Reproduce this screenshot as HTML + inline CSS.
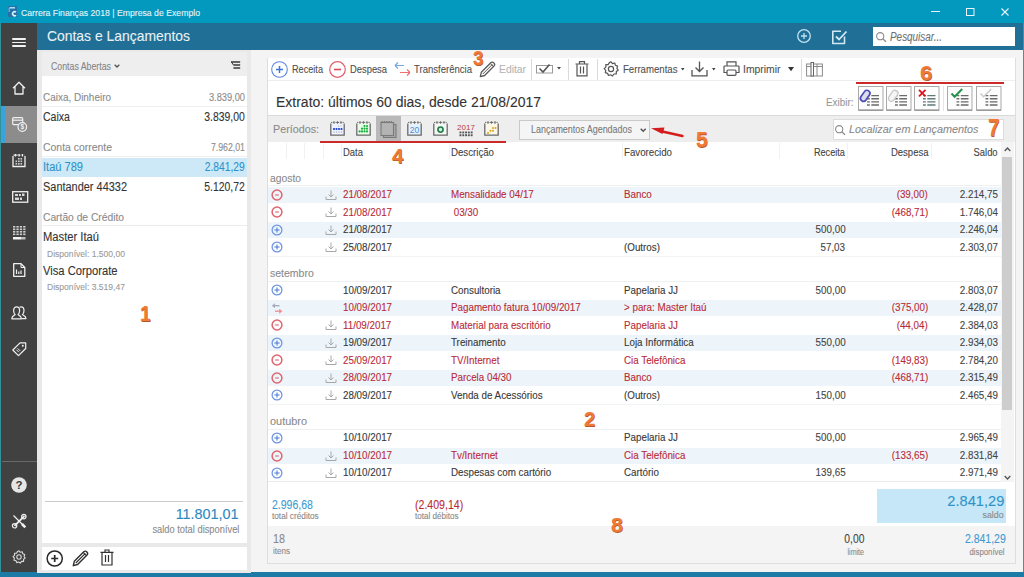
<!DOCTYPE html>
<html><head><meta charset="utf-8"><style>
html,body{margin:0;padding:0;width:1024px;height:577px;overflow:hidden;background:#f4f4f4;}
body{position:relative;font-family:"Liberation Sans", sans-serif;}
.t{position:absolute;white-space:nowrap;line-height:1;display:inline-block;-webkit-text-stroke:0.1px currentColor;}
svg{overflow:visible;}
</style></head><body>
<div style="position:absolute;left:0.00px;top:0.00px;width:1024.00px;height:23.00px;background:#0398be;"></div>
<div style="position:absolute;left:0.00px;top:23.00px;width:1024.00px;height:27.00px;background:#1f6f96;"></div>
<div style="position:absolute;left:0.00px;top:23.00px;width:37.00px;height:554.00px;background:#414141;"></div>
<div style="position:absolute;left:0.00px;top:23.00px;width:1.30px;height:554.00px;background:#33919a;"></div>
<div style="position:absolute;left:37.00px;top:50.00px;width:987.00px;height:527.00px;background:#f4f4f4;"></div>
<div style="position:absolute;left:1022.60px;top:23.00px;width:1.40px;height:554.00px;background:#3a98a4;"></div>
<div style="position:absolute;left:0.00px;top:572.30px;width:1024.00px;height:4.70px;background:#1b7aa6;"></div>
<div style="position:absolute;left:1.30px;top:106.00px;width:35.70px;height:36.50px;background:#8c8c8c;"></div>
<div style="position:absolute;left:1.30px;top:106.00px;width:4.20px;height:36.50px;background:#3aa3db;"></div>
<div style="position:absolute;left:2.00px;top:460.50px;width:35.00px;height:1.20px;background:#6a6a6a;"></div>
<div style="position:absolute;left:37.00px;top:50.00px;width:214.00px;height:523.00px;background:#e9e9e9;"></div>
<div style="position:absolute;left:41.50px;top:51.50px;width:205.50px;height:24.00px;background:#eeeeee;"></div>
<div style="position:absolute;left:41.50px;top:76.00px;width:205.50px;height:466.50px;background:#ffffff;"></div>
<div style="position:absolute;left:41.50px;top:547.00px;width:205.50px;height:23.00px;background:#ffffff;"></div>
<div style="position:absolute;left:42.00px;top:105.50px;width:205.00px;height:1.00px;background:#f0f0f0;"></div>
<div style="position:absolute;left:42.00px;top:155.50px;width:205.00px;height:1.00px;background:#f0f0f0;"></div>
<div style="position:absolute;left:42.00px;top:157.75px;width:204.50px;height:18.75px;background:#cde8f7;"></div>
<div style="position:absolute;left:42.00px;top:225.40px;width:205.00px;height:1.00px;background:#ececec;"></div>
<div style="position:absolute;left:45.00px;top:500.80px;width:198.00px;height:1.00px;background:#c8ccce;"></div>
<div style="position:absolute;left:266.50px;top:58.00px;width:749.00px;height:505.50px;background:#dedede;"></div>
<div style="position:absolute;left:267.50px;top:58.00px;width:747.00px;height:504.50px;background:#ffffff;"></div>
<div style="position:absolute;left:267.50px;top:80.00px;width:747.00px;height:1.00px;background:#eeeeee;"></div>
<div style="position:absolute;left:267.50px;top:115.00px;width:747.00px;height:27.00px;background:#eeeeee;"></div>
<div style="position:absolute;left:267.50px;top:114.80px;width:747.00px;height:1.00px;background:#dadada;"></div>
<div style="position:absolute;left:1001.00px;top:142.00px;width:12.50px;height:340.00px;background:#f4f4f4;"></div>
<div style="position:absolute;left:1002.00px;top:157.00px;width:9.50px;height:253.00px;background:#cdcdcd;"></div>
<div style="position:absolute;left:873.30px;top:27.40px;width:141.40px;height:18.60px;background:#ffffff;"></div>
<div style="position:absolute;left:519.00px;top:119.50px;width:131.25px;height:20.00px;background:#f5f5f5;box-sizing:border-box;border:1px solid #c9c9c9;"></div>
<div style="position:absolute;left:832.50px;top:118.75px;width:171.75px;height:20.75px;background:#ffffff;box-sizing:border-box;border:1px solid #dcdcdc;"></div>
<div style="position:absolute;left:376.00px;top:116.00px;width:25.00px;height:25.50px;background:#b9b9b9;"></div>
<div style="position:absolute;left:7.80px;top:6.20px;width:9.40px;height:10.40px;background:#2572a8;"></div>
<svg style="position:absolute;left:7.80px;top:6.20px;" width="9.4" height="10.4" viewBox="0 0 9.4 10.4"><path d="M1.5 1.8H7" stroke="#a8dcf2" stroke-width="1.6"/><path d="M1.2 1.8V6" stroke="#6fb8de" stroke-width="1.2"/><path d="M8 6.3A2 2 0 1 0 8 9.2" fill="none" stroke="#e0f4fc" stroke-width="1.5"/></svg>
<div style="position:absolute;left:931.00px;top:10.80px;width:8.60px;height:1.00px;background:#e8f6fb;"></div>
<svg style="position:absolute;left:965.70px;top:7.90px;" width="8.5" height="8" viewBox="0 0 8.5 8"><rect x="0.5" y="0.5" width="7.5" height="7" fill="none" stroke="#e8f6fb" stroke-width="1"/></svg>
<svg style="position:absolute;left:1001.40px;top:7.80px;" width="8" height="8" viewBox="0 0 8 8"><path d="M0.5 0.5L7.5 7.5M7.5 0.5L0.5 7.5" stroke="#e8f6fb" stroke-width="1.1"/></svg>
<div style="position:absolute;left:12.00px;top:37.80px;width:13.50px;height:1.90px;background:#f2f2f2;border-radius:1px;"></div>
<div style="position:absolute;left:12.00px;top:41.50px;width:13.50px;height:1.90px;background:#f2f2f2;border-radius:1px;"></div>
<div style="position:absolute;left:12.00px;top:45.10px;width:13.50px;height:1.90px;background:#f2f2f2;border-radius:1px;"></div>
<svg style="position:absolute;left:11.70px;top:81.00px;" width="14" height="14" viewBox="0 0 14 14"><path d="M1 7.2L7 1.2L13 7.2M3 5.5V13H11V5.5" fill="none" stroke="#f0f0f0" stroke-width="1.3" stroke-linejoin="round"/></svg>
<svg style="position:absolute;left:11.70px;top:116.80px;" width="15.5" height="15" viewBox="0 0 15.5 15"><rect x="0.7" y="0.7" width="10" height="7" rx="1" fill="none" stroke="#f0f0f0" stroke-width="1.2"/><path d="M0.7 3.2H10.7" stroke="#f0f0f0" stroke-width="1.2"/><circle cx="10.3" cy="10" r="4.3" fill="#8c8c8c" stroke="#f0f0f0" stroke-width="1.2"/><text x="10.3" y="12.3" font-size="6.5" text-anchor="middle" fill="#f0f0f0" font-family="Liberation Sans" font-weight="bold">$</text></svg>
<svg style="position:absolute;left:12.10px;top:153.20px;" width="14" height="14.5" viewBox="0 0 14 14.5"><path d="M1 3V13.5H13V3" fill="none" stroke="#f0f0f0" stroke-width="1.3"/><path d="M1.5 2.2H12.5" stroke="#f0f0f0" stroke-width="1.2" stroke-dasharray="1.5 1.2"/><path d="M3.5 1V3.5M7 1V3.5M10.5 1V3.5" stroke="#f0f0f0" stroke-width="1.2"/><g fill="#cfcfcf"><rect x="6" y="5" width="1.6" height="1.6"/><rect x="8.5" y="5" width="1.6" height="1.6"/><rect x="3.5" y="7.5" width="1.6" height="1.6"/><rect x="6" y="7.5" width="1.6" height="1.6"/><rect x="8.5" y="7.5" width="1.6" height="1.6"/><rect x="3.5" y="10" width="1.6" height="1.6"/><rect x="6" y="10" width="1.6" height="1.6"/><rect x="8.5" y="10" width="1.6" height="1.6"/></g></svg>
<svg style="position:absolute;left:12.10px;top:191.00px;" width="16.5" height="12" viewBox="0 0 16.5 12"><rect x="0.7" y="0.7" width="15" height="10.5" fill="none" stroke="#f0f0f0" stroke-width="1.3"/><g fill="#d8d8d8"><rect x="3" y="3" width="3" height="2"/><rect x="7" y="3" width="2" height="2"/><rect x="10" y="2.5" width="2.5" height="2.5"/><rect x="3" y="6.5" width="4" height="2.5"/><rect x="8" y="6.5" width="2" height="2.5"/></g></svg>
<svg style="position:absolute;left:13.30px;top:225.90px;" width="12.5" height="14" viewBox="0 0 12.5 14"><g fill="#cfcfcf"><rect x="0" y="0" width="2.3" height="1.6"/><rect x="3.4" y="0" width="2.3" height="1.6"/><rect x="6.8" y="0" width="2.3" height="1.6"/><rect x="10.2" y="0" width="2.3" height="1.6"/><rect x="0" y="2.5" width="2.3" height="1.6"/><rect x="3.4" y="2.5" width="2.3" height="1.6"/><rect x="6.8" y="2.5" width="2.3" height="1.6"/><rect x="10.2" y="2.5" width="2.3" height="1.6"/><rect x="0" y="5" width="2.3" height="1.6"/><rect x="3.4" y="5" width="2.3" height="1.6"/><rect x="6.8" y="5" width="2.3" height="1.6"/><rect x="10.2" y="5" width="2.3" height="1.6"/><rect x="0" y="7.5" width="2.3" height="1.6"/><rect x="3.4" y="7.5" width="2.3" height="1.6"/><rect x="6.8" y="7.5" width="2.3" height="1.6"/><rect x="10.2" y="7.5" width="2.3" height="1.6"/></g><rect x="0" y="11" width="8" height="2.5" fill="#f4f4f4"/><rect x="8" y="11" width="4.5" height="2.5" fill="#bdbdbd"/></svg>
<svg style="position:absolute;left:12.70px;top:262.90px;" width="12.5" height="14" viewBox="0 0 12.5 14"><path d="M0.7 0.7H8L11.8 4.5V13.3H0.7Z" fill="none" stroke="#f0f0f0" stroke-width="1.3" stroke-linejoin="round"/><path d="M8 0.7V4.5H11.8" fill="none" stroke="#f0f0f0" stroke-width="1"/><path d="M3.5 11V6.5M5.8 11V8.5M8 11V7.5" stroke="#f0f0f0" stroke-width="1.2"/></svg>
<svg style="position:absolute;left:10.90px;top:305.80px;" width="16" height="13.5" viewBox="0 0 16 13.5"><path d="M0.8 12.8C0.8 10 3 9.3 4.2 8.6C3 7.6 2.6 6 2.6 4.5C2.6 2.2 3.8 0.8 5.6 0.8C7.4 0.8 8.6 2.2 8.6 4.5C8.6 6 8.2 7.6 7 8.6C8.2 9.3 10.4 10 10.4 12.8Z" fill="none" stroke="#f0f0f0" stroke-width="1.2" stroke-linejoin="round"/><path d="M8.6 1.2C9 0.9 9.5 0.8 10 0.8C11.8 0.8 13 2.2 13 4.5C13 6 12.6 7.6 11.4 8.6C12.6 9.3 15 10 15 12.6H10.8" fill="none" stroke="#f0f0f0" stroke-width="1.2" stroke-linejoin="round"/></svg>
<svg style="position:absolute;left:11.50px;top:341.50px;" width="14.5" height="14.5" viewBox="0 0 14.5 14.5"><path d="M8 0.8H13.7V6.5L6.5 13.7L0.8 8Z" fill="none" stroke="#f0f0f0" stroke-width="1.2" stroke-linejoin="round"/><circle cx="10.8" cy="3.7" r="1" fill="#f0f0f0"/><path d="M4.3 7.6L6.9 10.2M5.6 6.3L8.2 8.9" stroke="#f0f0f0" stroke-width="1"/></svg>
<svg style="position:absolute;left:10.90px;top:476.60px;" width="16" height="16" viewBox="0 0 16 16"><circle cx="8" cy="8" r="7.8" fill="#e6e6e6"/><text x="8" y="12.3" font-size="11.5" text-anchor="middle" fill="#3b3b3b" font-family="Liberation Sans" font-weight="bold">?</text></svg>
<svg style="position:absolute;left:11.50px;top:513.70px;" width="14.5" height="14.5" viewBox="0 0 14.5 14.5"><path d="M1.5 1.5L12.5 12.5" stroke="#f0f0f0" stroke-width="1.3"/><path d="M10 10L13.3 13.3" stroke="#f0f0f0" stroke-width="2.6"/><path d="M12.5 1.8L2.5 11.8" stroke="#f0f0f0" stroke-width="1.8"/><circle cx="11.8" cy="2.6" r="2.2" fill="none" stroke="#f0f0f0" stroke-width="1.2"/><circle cx="2.6" cy="11.8" r="2.2" fill="none" stroke="#f0f0f0" stroke-width="1.2"/></svg>
<svg style="position:absolute;left:11.90px;top:550.00px;" width="14" height="14" viewBox="0 0 14 14"><path d="M7 0.8L8.3 2.3L10.3 1.8L10.8 3.8L12.7 4.5L12.1 6.5L13.2 8.1L11.6 9.3L11.6 11.4L9.6 11.4L8.3 13.1L6.7 12L4.7 12.6L4 10.7L2 10.2L2.4 8.2L1 6.6L2.6 5.4L2.5 3.3L4.5 3.2L5.6 1.4Z" fill="none" stroke="#d9d9d9" stroke-width="1.1" stroke-linejoin="round"/><circle cx="7" cy="7" r="2.2" fill="none" stroke="#d9d9d9" stroke-width="1.1"/></svg>
<svg style="position:absolute;left:797.30px;top:29.40px;" width="14" height="14" viewBox="0 0 14 14"><circle cx="7" cy="7" r="6.3" fill="none" stroke="#c2e2f1" stroke-width="1.3"/><path d="M7 4V10M4 7H10" stroke="#c2e2f1" stroke-width="1.3"/></svg>
<svg style="position:absolute;left:832.10px;top:28.80px;" width="16" height="15.5" viewBox="0 0 16 15.5"><path d="M12.5 7.5V14.5H0.8V2.2H9" fill="none" stroke="#d2e9f4" stroke-width="1.6" stroke-linejoin="round"/><path d="M4 7.5L7 10.5L14.5 2.5" fill="none" stroke="#d2e9f4" stroke-width="1.8"/></svg>
<svg style="position:absolute;left:876.00px;top:31.50px;" width="11" height="10" viewBox="0 0 11 10"><circle cx="4.2" cy="4.2" r="3.6" fill="none" stroke="#8a8a8a" stroke-width="1.1"/><path d="M6.8 6.8L10 9.7" stroke="#8a8a8a" stroke-width="1.2"/></svg>
<svg style="position:absolute;left:114.10px;top:63.60px;" width="6" height="4" viewBox="0 0 6 4"><path d="M0.7 0.7L3 3L5.3 0.7" fill="none" stroke="#555" stroke-width="1.4"/></svg>
<svg style="position:absolute;left:230.80px;top:60.50px;" width="9.5" height="8" viewBox="0 0 9.5 8"><path d="M0 1H9.2M2.4 4H9.2M2.4 7H9.2" stroke="#3a3a3a" stroke-width="1.3"/><path d="M0.5 1L2.4 4" stroke="#3a3a3a" stroke-width="1"/></svg>
<svg style="position:absolute;left:45.80px;top:549.60px;" width="17.5" height="17" viewBox="0 0 17.5 17"><circle cx="8.7" cy="8.5" r="7.6" fill="none" stroke="#2a2a2a" stroke-width="1.5"/><path d="M8.7 5V12M5.2 8.5H12.2" stroke="#2a2a2a" stroke-width="1.7"/></svg>
<svg style="position:absolute;left:72.00px;top:549.80px;" width="17" height="17" viewBox="0 0 17 17"><path d="M1.3 15.7L2.3 11.3L11.8 1.8Q13.4 0.4 14.9 1.9Q16.4 3.5 15 5L5.6 14.5Z" fill="none" stroke="#2e2e2e" stroke-width="1.4" stroke-linejoin="round"/><path d="M3.8 13L13.4 3.4M11.2 2.4L14.4 5.6" stroke="#2e2e2e" stroke-width="1.1"/></svg>
<svg style="position:absolute;left:99.50px;top:549.30px;" width="14" height="17" viewBox="0 0 14 17"><path d="M0.5 3.3H13.5M5 3.3V1H9V3.3" fill="none" stroke="#333" stroke-width="1.2"/><path d="M2 3.5V16H12V3.5M5.5 6V13M8.5 6V13" fill="none" stroke="#333" stroke-width="1.2"/></svg>
<svg style="position:absolute;left:271.00px;top:60.80px;" width="17" height="17" viewBox="0 0 17 17"><circle cx="8.5" cy="8.5" r="7.8" fill="none" stroke="#5f86db" stroke-width="1.1"/><path d="M8.5 5V12M5 8.5H12" stroke="#3f74d6" stroke-width="1.5"/></svg>
<svg style="position:absolute;left:329.40px;top:60.80px;" width="17" height="17" viewBox="0 0 17 17"><circle cx="8.5" cy="8.5" r="7.8" fill="none" stroke="#e2606a" stroke-width="1.2"/><path d="M5 8.5H12" stroke="#dc4a56" stroke-width="1.6"/></svg>
<svg style="position:absolute;left:393.50px;top:61.00px;" width="17" height="16" viewBox="0 0 17 16"><path d="M1 4.5H10M1 4.5L4 1.5M1 4.5L4 7.5" fill="none" stroke="#79a7e6" stroke-width="1.2"/><path d="M6 11.5H16M16 11.5L13 8.5M16 11.5L13 14.5" fill="none" stroke="#ef6f6f" stroke-width="1.2"/></svg>
<svg style="position:absolute;left:478.70px;top:60.80px;" width="17" height="17" viewBox="0 0 17 17"><path d="M1.3 15.7L2.3 11.3L11.8 1.8Q13.4 0.4 14.9 1.9Q16.4 3.5 15 5L5.6 14.5Z" fill="none" stroke="#5a5a5a" stroke-width="1.3" stroke-linejoin="round"/><path d="M3.8 13L13.4 3.4M11.2 2.4L14.4 5.6" stroke="#5a5a5a" stroke-width="1"/></svg>
<div style="position:absolute;left:530.50px;top:58.50px;width:1.00px;height:21.00px;background:#dadada;"></div>
<svg style="position:absolute;left:535.90px;top:62.50px;" width="18" height="11" viewBox="0 0 18 11"><rect x="0.5" y="2.5" width="16" height="7.5" fill="none" stroke="#9a9a9a" stroke-width="1"/><path d="M3.5 5.5L7 9L13.5 1.5" fill="none" stroke="#555" stroke-width="1.6"/></svg>
<svg style="position:absolute;left:556.80px;top:67.20px;" width="4" height="3" viewBox="0 0 4 3"><path d="M0 0H4L2 2.5Z" fill="#444"/></svg>
<div style="position:absolute;left:567.80px;top:58.50px;width:1.00px;height:21.00px;background:#dadada;"></div>
<svg style="position:absolute;left:574.70px;top:61.10px;" width="14" height="15.5" viewBox="0 0 14 15.5"><path d="M0.5 3H13.5M4.5 3V0.7H9.5V3" fill="none" stroke="#555" stroke-width="1.2"/><path d="M2 3.2V14.8H12V3.2M5.5 5.5V12.5M8.5 5.5V12.5" fill="none" stroke="#555" stroke-width="1.2"/></svg>
<div style="position:absolute;left:596.60px;top:58.50px;width:1.00px;height:21.00px;background:#dadada;"></div>
<svg style="position:absolute;left:602.50px;top:61.10px;" width="16" height="16" viewBox="0 0 16 16"><path d="M8 0.8L9.5 2.6L11.8 2L12.4 4.3L14.6 5.1L13.9 7.4L15.2 9.2L13.3 10.6L13.3 13L11 13L9.5 15L7.6 13.8L5.4 14.5L4.6 12.3L2.3 11.7L2.8 9.4L1.1 7.6L2.9 6.1L2.8 3.7L5.1 3.6L6.4 1.6Z" fill="none" stroke="#555" stroke-width="1.2" stroke-linejoin="round"/><circle cx="8" cy="8" r="2.6" fill="none" stroke="#555" stroke-width="1.2"/></svg>
<svg style="position:absolute;left:680.60px;top:67.80px;" width="3.5" height="3" viewBox="0 0 3.5 3"><path d="M0 0H3.5L1.75 2.5Z" fill="#444"/></svg>
<svg style="position:absolute;left:691.40px;top:61.10px;" width="17" height="15.5" viewBox="0 0 17 15.5"><path d="M8.5 0.5V10.5M4.5 6.5L8.5 10.5L12.5 6.5" fill="none" stroke="#555" stroke-width="1.3"/><path d="M1 9V14.8H16V9" fill="none" stroke="#555" stroke-width="1.3"/></svg>
<svg style="position:absolute;left:712.40px;top:67.80px;" width="3.5" height="3" viewBox="0 0 3.5 3"><path d="M0 0H3.5L1.75 2.5Z" fill="#444"/></svg>
<svg style="position:absolute;left:723.20px;top:61.10px;" width="17" height="15" viewBox="0 0 17 15"><path d="M4 5V0.8H13V5" fill="none" stroke="#555" stroke-width="1.2"/><path d="M4 11.5H1V5.5Q1 5 1.5 5H15.5Q16 5 16 5.5V11.5H13" fill="none" stroke="#555" stroke-width="1.2"/><rect x="4" y="9" width="9" height="5.3" rx="1" fill="none" stroke="#555" stroke-width="1.2"/></svg>
<svg style="position:absolute;left:787.60px;top:66.80px;" width="6" height="4.5" viewBox="0 0 6 4.5"><path d="M0 0H6L3 4.3Z" fill="#333"/></svg>
<div style="position:absolute;left:800.80px;top:58.50px;width:1.00px;height:21.00px;background:#dadada;"></div>
<svg style="position:absolute;left:806.20px;top:61.90px;" width="17" height="14.5" viewBox="0 0 17 14.5"><rect x="0.6" y="2" width="15.8" height="12" fill="none" stroke="#8a8a8a" stroke-width="1"/><path d="M6 2V14M11 2V14M0.6 4.5H16.4" stroke="#8a8a8a" stroke-width="1"/><rect x="5" y="0.5" width="2.5" height="13.5" fill="#fff" stroke="#666" stroke-width="1"/></svg>
<svg style="position:absolute;left:858.30px;top:86.40px;" width="25.5" height="24.8" viewBox="0 0 25.5 24.8"><rect x="0.5" y="0.5" width="24.5" height="23.6" fill="#fdfdfd" stroke="#a9a9a9" stroke-width="1"/><path d="M0.5 24.2H25" stroke="#8f8f8f" stroke-width="1.2"/></svg>
<svg style="position:absolute;left:886.20px;top:86.40px;" width="25.5" height="24.8" viewBox="0 0 25.5 24.8"><rect x="0.5" y="0.5" width="24.5" height="23.6" fill="#fdfdfd" stroke="#a9a9a9" stroke-width="1"/><path d="M0.5 24.2H25" stroke="#8f8f8f" stroke-width="1.2"/></svg>
<svg style="position:absolute;left:914.00px;top:86.40px;" width="25.5" height="24.8" viewBox="0 0 25.5 24.8"><rect x="0.5" y="0.5" width="24.5" height="23.6" fill="#fdfdfd" stroke="#a9a9a9" stroke-width="1"/><path d="M0.5 24.2H25" stroke="#8f8f8f" stroke-width="1.2"/></svg>
<svg style="position:absolute;left:946.60px;top:86.40px;" width="25.5" height="24.8" viewBox="0 0 25.5 24.8"><rect x="0.5" y="0.5" width="24.5" height="23.6" fill="#fdfdfd" stroke="#a9a9a9" stroke-width="1"/><path d="M0.5 24.2H25" stroke="#8f8f8f" stroke-width="1.2"/></svg>
<svg style="position:absolute;left:975.80px;top:86.40px;" width="25.5" height="24.8" viewBox="0 0 25.5 24.8"><rect x="0.5" y="0.5" width="24.5" height="23.6" fill="#fdfdfd" stroke="#a9a9a9" stroke-width="1"/><path d="M0.5 24.2H25" stroke="#8f8f8f" stroke-width="1.2"/></svg>
<svg style="position:absolute;left:858.30px;top:86.40px;" width="25.5" height="24.8" viewBox="0 0 25.5 24.8"><path d="M9 9.6H11.8M13.3 9.6H21" stroke="#6a6a6a" stroke-width="1.4"/><path d="M9 12.75H11.8M13.3 12.75H21" stroke="#6a6a6a" stroke-width="1.4"/><path d="M9 15.9H11.8M13.3 15.9H21" stroke="#6a6a6a" stroke-width="1.4"/><path d="M9 19.05H11.8M13.3 19.05H21" stroke="#6a6a6a" stroke-width="1.4"/><rect x="4.2" y="3.8" width="6" height="12" rx="3" transform="rotate(35 7.2 9.8)" fill="#dde" stroke="#4c4cb5" stroke-width="1.7"/></svg>
<svg style="position:absolute;left:886.20px;top:86.40px;" width="25.5" height="24.8" viewBox="0 0 25.5 24.8"><path d="M9 9.6H11.8M13.3 9.6H21" stroke="#6a6a6a" stroke-width="1.4"/><path d="M9 12.75H11.8M13.3 12.75H21" stroke="#6a6a6a" stroke-width="1.4"/><path d="M9 15.9H11.8M13.3 15.9H21" stroke="#6a6a6a" stroke-width="1.4"/><path d="M9 19.05H11.8M13.3 19.05H21" stroke="#6a6a6a" stroke-width="1.4"/><rect x="4.2" y="3.8" width="6" height="12" rx="3" transform="rotate(35 7.2 9.8)" fill="#f6f6f6" stroke="#c8c8c8" stroke-width="1.3"/></svg>
<svg style="position:absolute;left:914.00px;top:86.40px;" width="25.8" height="24.8" viewBox="0 0 25.8 24.8"><path d="M9 9.6H11.8M13.3 9.6H21.5" stroke="#607a7a" stroke-width="1.4"/><path d="M9 12.75H11.8M13.3 12.75H21.5" stroke="#607a7a" stroke-width="1.4"/><path d="M9 15.9H11.8M13.3 15.9H21.5" stroke="#607a7a" stroke-width="1.4"/><path d="M9 19.05H11.8M13.3 19.05H21.5" stroke="#607a7a" stroke-width="1.4"/><path d="M5 3.8L11.5 10.3M11.5 3.8L5 10.3" stroke="#e0141e" stroke-width="1.8"/></svg>
<svg style="position:absolute;left:946.60px;top:86.40px;" width="26.2" height="24.8" viewBox="0 0 26.2 24.8"><path d="M9.5 9.6H12.3M13.8 9.6H21.5" stroke="#6a6a6a" stroke-width="1.4"/><path d="M9.5 12.75H12.3M13.8 12.75H21.5" stroke="#6a6a6a" stroke-width="1.4"/><path d="M9.5 15.9H12.3M13.8 15.9H21.5" stroke="#6a6a6a" stroke-width="1.4"/><path d="M9.5 19.05H12.3M13.8 19.05H21.5" stroke="#6a6a6a" stroke-width="1.4"/><path d="M4.5 7.5L7.6 10.8L15.2 3" fill="none" stroke="#23954a" stroke-width="2"/></svg>
<svg style="position:absolute;left:975.80px;top:86.40px;" width="25" height="24.8" viewBox="0 0 25 24.8"><path d="M9.5 9.6H12.3M13.8 9.6H21.5" stroke="#6a6a6a" stroke-width="1.4"/><path d="M9.5 12.75H12.3M13.8 12.75H21.5" stroke="#6a6a6a" stroke-width="1.4"/><path d="M9.5 15.9H12.3M13.8 15.9H21.5" stroke="#6a6a6a" stroke-width="1.4"/><path d="M9.5 19.05H12.3M13.8 19.05H21.5" stroke="#6a6a6a" stroke-width="1.4"/><path d="M4.5 7.5L7.6 10.8L15.2 3" fill="none" stroke="#c9c9c9" stroke-width="1.4"/></svg>
<div style="position:absolute;left:942.50px;top:86.00px;width:1.00px;height:25.00px;background:#e6e6e6;"></div>
<svg style="position:absolute;left:329.80px;top:121.20px;" width="15" height="15" viewBox="0 0 15 15"><rect x="1" y="2.5" width="13" height="11.5" fill="#eef2fb"/><path d="M0.8 2.5V14.2H14.2V2.5" fill="none" stroke="#6a6a6a" stroke-width="1.3"/><path d="M1 1.4H14" stroke="#6a6a6a" stroke-width="1" stroke-dasharray="1.3 1"/><path d="M4 0.3V2.8M7.5 0.3V2.8M11 0.3V2.8" stroke="#6a6a6a" stroke-width="1.1"/><circle cx="8.5" cy="5" r="0.6" fill="#9aa6c8"/><circle cx="11" cy="5" r="0.6" fill="#9aa6c8"/><circle cx="4" cy="8" r="1.1" fill="#1a3fcf"/><circle cx="6.5" cy="8" r="1.1" fill="#1a3fcf"/><circle cx="9" cy="8" r="1.1" fill="#1a3fcf"/><circle cx="11.5" cy="8" r="1.1" fill="#1a3fcf"/><circle cx="4" cy="11" r="0.7" fill="#a8b0c0"/><circle cx="6.5" cy="11" r="0.7" fill="#a8b0c0"/><circle cx="9" cy="11" r="0.7" fill="#a8b0c0"/><circle cx="11.5" cy="11" r="0.7" fill="#a8b0c0"/></svg>
<svg style="position:absolute;left:355.80px;top:121.20px;" width="15" height="15" viewBox="0 0 15 15"><rect x="1" y="2.5" width="13" height="11.5" fill="#eafbea"/><path d="M0.8 2.5V14.2H14.2V2.5" fill="none" stroke="#6a6a6a" stroke-width="1.3"/><path d="M1 1.4H14" stroke="#6a6a6a" stroke-width="1" stroke-dasharray="1.3 1"/><path d="M4 0.3V2.8M7.5 0.3V2.8M11 0.3V2.8" stroke="#6a6a6a" stroke-width="1.1"/><circle cx="8.5" cy="5" r="1.1" fill="#19b13a"/><circle cx="11" cy="5" r="1.1" fill="#19b13a"/><circle cx="6" cy="7.7" r="1.1" fill="#19b13a"/><circle cx="8.5" cy="7.7" r="1.1" fill="#19b13a"/><circle cx="11" cy="7.7" r="1.1" fill="#19b13a"/><circle cx="6" cy="10.4" r="1.1" fill="#19b13a"/><circle cx="8.5" cy="10.4" r="1.1" fill="#19b13a"/><circle cx="11" cy="10.4" r="1.1" fill="#19b13a"/><circle cx="3.6" cy="10.4" r="1.1" fill="#19b13a"/></svg>
<svg style="position:absolute;left:380.00px;top:119.50px;" width="17.5" height="19" viewBox="0 0 17.5 19"><rect x="3.5" y="4.5" width="12.5" height="13" fill="#a8a8a8" stroke="#7a7a7a" stroke-width="1.1"/><rect x="1" y="2.5" width="12.5" height="13" fill="#b3b3b3" stroke="#7a7a7a" stroke-width="1.1"/><path d="M1.5 1.5H13" stroke="#7a7a7a" stroke-width="1" stroke-dasharray="1.3 1"/></svg>
<svg style="position:absolute;left:407.30px;top:121.20px;" width="15" height="15" viewBox="0 0 15 15"><rect x="1" y="2.5" width="13" height="11.5" fill="#e6f1fb"/><path d="M0.8 2.5V14.2H14.2V2.5" fill="none" stroke="#6a6a6a" stroke-width="1.3"/><path d="M1 1.4H14" stroke="#6a6a6a" stroke-width="1" stroke-dasharray="1.3 1"/><path d="M4 0.3V2.8M7.5 0.3V2.8M11 0.3V2.8" stroke="#6a6a6a" stroke-width="1.1"/><text x="7.5" y="12.3" font-size="8.5" text-anchor="middle" fill="#4a8ed8" font-family="Liberation Sans">20</text></svg>
<svg style="position:absolute;left:433.00px;top:121.20px;" width="15" height="15" viewBox="0 0 15 15"><rect x="1" y="2.5" width="13" height="11.5" fill="#f4f8f4"/><path d="M0.8 2.5V14.2H14.2V2.5" fill="none" stroke="#6a6a6a" stroke-width="1.3"/><path d="M1 1.4H14" stroke="#6a6a6a" stroke-width="1" stroke-dasharray="1.3 1"/><path d="M4 0.3V2.8M7.5 0.3V2.8M11 0.3V2.8" stroke="#6a6a6a" stroke-width="1.1"/><circle cx="7.5" cy="8.6" r="2.6" fill="#d0f0dc" stroke="#1f7a4a" stroke-width="1.6"/></svg>
<svg style="position:absolute;left:458.00px;top:121.50px;" width="16.5" height="15" viewBox="0 0 16.5 15"><text x="8" y="7.5" font-size="8" text-anchor="middle" fill="#c23a3a" font-family="Liberation Sans">2017</text><rect x="1.5" y="9.5" width="1.9" height="1.9" fill="#555"/><rect x="1.5" y="12.3" width="1.9" height="1.9" fill="#555"/><rect x="4.3" y="9.5" width="1.9" height="1.9" fill="#555"/><rect x="4.3" y="12.3" width="1.9" height="1.9" fill="#555"/><rect x="7.1" y="9.5" width="1.9" height="1.9" fill="#555"/><rect x="7.1" y="12.3" width="1.9" height="1.9" fill="#555"/><rect x="9.9" y="9.5" width="1.9" height="1.9" fill="#555"/><rect x="9.9" y="12.3" width="1.9" height="1.9" fill="#555"/><rect x="12.7" y="9.5" width="1.9" height="1.9" fill="#555"/><rect x="12.7" y="12.3" width="1.9" height="1.9" fill="#555"/></svg>
<svg style="position:absolute;left:483.80px;top:121.20px;" width="15" height="15" viewBox="0 0 15 15"><rect x="1" y="2.5" width="13" height="11.5" fill="#fbf7e6"/><path d="M0.8 2.5V14.2H14.2V2.5" fill="none" stroke="#6a6a6a" stroke-width="1.3"/><path d="M1 1.4H14" stroke="#6a6a6a" stroke-width="1" stroke-dasharray="1.3 1"/><path d="M4 0.3V2.8M7.5 0.3V2.8M11 0.3V2.8" stroke="#6a6a6a" stroke-width="1.1"/><circle cx="9" cy="7" r="1" fill="#e0a21a"/><circle cx="11.5" cy="7" r="1" fill="#e0a21a"/><circle cx="6.5" cy="9.7" r="1" fill="#e0a21a"/><circle cx="9" cy="9.7" r="1" fill="#e0a21a"/><circle cx="4" cy="12" r="1" fill="#e0a21a"/></svg>
<svg style="position:absolute;left:639.80px;top:127.50px;" width="6.5" height="4" viewBox="0 0 6.5 4"><path d="M0.7 0.7L3.2 3.2L5.7 0.7" fill="none" stroke="#555" stroke-width="1.5"/></svg>
<svg style="position:absolute;left:835.00px;top:124.70px;" width="11" height="10" viewBox="0 0 11 10"><circle cx="4.2" cy="4.2" r="3.6" fill="none" stroke="#8a8a8a" stroke-width="1.1"/><path d="M6.8 6.8L10 9.7" stroke="#8a8a8a" stroke-width="1.2"/></svg>
<svg style="position:absolute;left:1003.50px;top:147.00px;" width="7" height="5" viewBox="0 0 7 5"><path d="M0.7 4L3.5 1L6.3 4" fill="none" stroke="#555" stroke-width="1.3"/></svg>
<svg style="position:absolute;left:1003.50px;top:474.50px;" width="7" height="5" viewBox="0 0 7 5"><path d="M0.7 1L3.5 4L6.3 1" fill="none" stroke="#555" stroke-width="1.3"/></svg>
<div style="position:absolute;left:285.50px;top:143.00px;width:1.00px;height:16.00px;background:#f1f1f1;"></div>
<div style="position:absolute;left:304.00px;top:143.00px;width:1.00px;height:16.00px;background:#f1f1f1;"></div>
<div style="position:absolute;left:322.50px;top:143.00px;width:1.00px;height:16.00px;background:#f1f1f1;"></div>
<div style="position:absolute;left:340.50px;top:143.00px;width:1.00px;height:16.00px;background:#f1f1f1;"></div>
<div style="position:absolute;left:448.50px;top:143.00px;width:1.00px;height:16.00px;background:#f1f1f1;"></div>
<div style="position:absolute;left:621.50px;top:143.00px;width:1.00px;height:16.00px;background:#f1f1f1;"></div>
<div style="position:absolute;left:778.75px;top:143.00px;width:1.00px;height:16.00px;background:#f1f1f1;"></div>
<div style="position:absolute;left:846.90px;top:143.00px;width:1.00px;height:16.00px;background:#f1f1f1;"></div>
<div style="position:absolute;left:930.60px;top:143.00px;width:1.00px;height:16.00px;background:#f1f1f1;"></div>
<div style="position:absolute;left:267.50px;top:185.40px;width:733.00px;height:1.00px;background:#eef0f2;"></div>
<div style="position:absolute;left:267.50px;top:186.90px;width:733.50px;height:16.60px;background:#edf5fb;"></div>
<svg style="position:absolute;left:271.40px;top:188.90px;" width="12" height="12" viewBox="0 0 12 12"><circle cx="6" cy="6" r="4.9" fill="none" stroke="#e2646e" stroke-width="1.5"/><path d="M4.2 6H7.8" stroke="#d8707a" stroke-width="1.2"/></svg>
<svg style="position:absolute;left:325.00px;top:188.90px;" width="12" height="12" viewBox="0 0 12 12"><path d="M6 1.5V8M3.5 5.5L6 8L8.5 5.5M1 7.5V10.5H11V7.5" fill="none" stroke="#a8a8a8" stroke-width="1"/></svg>
<svg style="position:absolute;left:271.40px;top:206.40px;" width="12" height="12" viewBox="0 0 12 12"><circle cx="6" cy="6" r="4.9" fill="none" stroke="#e2646e" stroke-width="1.5"/><path d="M4.2 6H7.8" stroke="#d8707a" stroke-width="1.2"/></svg>
<svg style="position:absolute;left:325.00px;top:206.40px;" width="12" height="12" viewBox="0 0 12 12"><path d="M6 1.5V8M3.5 5.5L6 8L8.5 5.5M1 7.5V10.5H11V7.5" fill="none" stroke="#a8a8a8" stroke-width="1"/></svg>
<div style="position:absolute;left:267.50px;top:221.90px;width:733.50px;height:16.60px;background:#edf5fb;"></div>
<svg style="position:absolute;left:271.40px;top:223.90px;" width="12" height="12" viewBox="0 0 12 12"><circle cx="6" cy="6" r="4.9" fill="none" stroke="#6d95e2" stroke-width="1.25"/><path d="M6 3.4V8.6M3.4 6H8.6" stroke="#4a7ad8" stroke-width="1.05"/></svg>
<svg style="position:absolute;left:325.00px;top:223.90px;" width="12" height="12" viewBox="0 0 12 12"><path d="M6 1.5V8M3.5 5.5L6 8L8.5 5.5M1 7.5V10.5H11V7.5" fill="none" stroke="#a8a8a8" stroke-width="1"/></svg>
<svg style="position:absolute;left:271.40px;top:241.40px;" width="12" height="12" viewBox="0 0 12 12"><circle cx="6" cy="6" r="4.9" fill="none" stroke="#6d95e2" stroke-width="1.25"/><path d="M6 3.4V8.6M3.4 6H8.6" stroke="#4a7ad8" stroke-width="1.05"/></svg>
<svg style="position:absolute;left:325.00px;top:241.40px;" width="12" height="12" viewBox="0 0 12 12"><path d="M6 1.5V8M3.5 5.5L6 8L8.5 5.5M1 7.5V10.5H11V7.5" fill="none" stroke="#a8a8a8" stroke-width="1"/></svg>
<div style="position:absolute;left:267.50px;top:280.70px;width:733.00px;height:1.00px;background:#eef0f2;"></div>
<div style="position:absolute;left:267.50px;top:255.70px;width:733.00px;height:1.00px;background:#f2f3f4;"></div>
<svg style="position:absolute;left:271.40px;top:284.20px;" width="12" height="12" viewBox="0 0 12 12"><circle cx="6" cy="6" r="4.9" fill="none" stroke="#6d95e2" stroke-width="1.25"/><path d="M6 3.4V8.6M3.4 6H8.6" stroke="#4a7ad8" stroke-width="1.05"/></svg>
<div style="position:absolute;left:267.50px;top:299.70px;width:733.50px;height:16.60px;background:#edf5fb;"></div>
<svg style="position:absolute;left:270.40px;top:300.70px;" width="14" height="14" viewBox="0 0 14 14"><path d="M4 4.7H9.5" stroke="#a4abbb" stroke-width="1.4"/><path d="M1.8 4.7L5 2.2V7.2Z" fill="#a4abbb"/><path d="M5 10.2H10" stroke="#ee9098" stroke-width="1.4"/><path d="M12.5 10.2L9.2 7.7V12.7Z" fill="#ee9098"/></svg>
<svg style="position:absolute;left:271.40px;top:319.20px;" width="12" height="12" viewBox="0 0 12 12"><circle cx="6" cy="6" r="4.9" fill="none" stroke="#e2646e" stroke-width="1.5"/><path d="M4.2 6H7.8" stroke="#d8707a" stroke-width="1.2"/></svg>
<svg style="position:absolute;left:325.00px;top:319.20px;" width="12" height="12" viewBox="0 0 12 12"><path d="M6 1.5V8M3.5 5.5L6 8L8.5 5.5M1 7.5V10.5H11V7.5" fill="none" stroke="#a8a8a8" stroke-width="1"/></svg>
<div style="position:absolute;left:267.50px;top:334.70px;width:733.50px;height:16.60px;background:#edf5fb;"></div>
<svg style="position:absolute;left:271.40px;top:336.70px;" width="12" height="12" viewBox="0 0 12 12"><circle cx="6" cy="6" r="4.9" fill="none" stroke="#6d95e2" stroke-width="1.25"/><path d="M6 3.4V8.6M3.4 6H8.6" stroke="#4a7ad8" stroke-width="1.05"/></svg>
<svg style="position:absolute;left:325.00px;top:336.70px;" width="12" height="12" viewBox="0 0 12 12"><path d="M6 1.5V8M3.5 5.5L6 8L8.5 5.5M1 7.5V10.5H11V7.5" fill="none" stroke="#a8a8a8" stroke-width="1"/></svg>
<svg style="position:absolute;left:271.40px;top:354.20px;" width="12" height="12" viewBox="0 0 12 12"><circle cx="6" cy="6" r="4.9" fill="none" stroke="#e2646e" stroke-width="1.5"/><path d="M4.2 6H7.8" stroke="#d8707a" stroke-width="1.2"/></svg>
<svg style="position:absolute;left:325.00px;top:354.20px;" width="12" height="12" viewBox="0 0 12 12"><path d="M6 1.5V8M3.5 5.5L6 8L8.5 5.5M1 7.5V10.5H11V7.5" fill="none" stroke="#a8a8a8" stroke-width="1"/></svg>
<div style="position:absolute;left:267.50px;top:369.70px;width:733.50px;height:16.60px;background:#edf5fb;"></div>
<svg style="position:absolute;left:271.40px;top:371.70px;" width="12" height="12" viewBox="0 0 12 12"><circle cx="6" cy="6" r="4.9" fill="none" stroke="#e2646e" stroke-width="1.5"/><path d="M4.2 6H7.8" stroke="#d8707a" stroke-width="1.2"/></svg>
<svg style="position:absolute;left:325.00px;top:371.70px;" width="12" height="12" viewBox="0 0 12 12"><path d="M6 1.5V8M3.5 5.5L6 8L8.5 5.5M1 7.5V10.5H11V7.5" fill="none" stroke="#a8a8a8" stroke-width="1"/></svg>
<svg style="position:absolute;left:271.40px;top:389.20px;" width="12" height="12" viewBox="0 0 12 12"><circle cx="6" cy="6" r="4.9" fill="none" stroke="#6d95e2" stroke-width="1.25"/><path d="M6 3.4V8.6M3.4 6H8.6" stroke="#4a7ad8" stroke-width="1.05"/></svg>
<svg style="position:absolute;left:325.00px;top:389.20px;" width="12" height="12" viewBox="0 0 12 12"><path d="M6 1.5V8M3.5 5.5L6 8L8.5 5.5M1 7.5V10.5H11V7.5" fill="none" stroke="#a8a8a8" stroke-width="1"/></svg>
<div style="position:absolute;left:267.50px;top:428.50px;width:733.00px;height:1.00px;background:#eef0f2;"></div>
<div style="position:absolute;left:267.50px;top:403.50px;width:733.00px;height:1.00px;background:#f2f3f4;"></div>
<svg style="position:absolute;left:271.40px;top:432.00px;" width="12" height="12" viewBox="0 0 12 12"><circle cx="6" cy="6" r="4.9" fill="none" stroke="#6d95e2" stroke-width="1.25"/><path d="M6 3.4V8.6M3.4 6H8.6" stroke="#4a7ad8" stroke-width="1.05"/></svg>
<div style="position:absolute;left:267.50px;top:447.50px;width:733.50px;height:16.60px;background:#edf5fb;"></div>
<svg style="position:absolute;left:271.40px;top:449.50px;" width="12" height="12" viewBox="0 0 12 12"><circle cx="6" cy="6" r="4.9" fill="none" stroke="#e2646e" stroke-width="1.5"/><path d="M4.2 6H7.8" stroke="#d8707a" stroke-width="1.2"/></svg>
<svg style="position:absolute;left:325.00px;top:449.50px;" width="12" height="12" viewBox="0 0 12 12"><path d="M6 1.5V8M3.5 5.5L6 8L8.5 5.5M1 7.5V10.5H11V7.5" fill="none" stroke="#a8a8a8" stroke-width="1"/></svg>
<svg style="position:absolute;left:271.40px;top:467.00px;" width="12" height="12" viewBox="0 0 12 12"><circle cx="6" cy="6" r="4.9" fill="none" stroke="#6d95e2" stroke-width="1.25"/><path d="M6 3.4V8.6M3.4 6H8.6" stroke="#4a7ad8" stroke-width="1.05"/></svg>
<svg style="position:absolute;left:325.00px;top:467.00px;" width="12" height="12" viewBox="0 0 12 12"><path d="M6 1.5V8M3.5 5.5L6 8L8.5 5.5M1 7.5V10.5H11V7.5" fill="none" stroke="#a8a8a8" stroke-width="1"/></svg>
<div style="position:absolute;left:267.50px;top:481.20px;width:733.00px;height:1.20px;background:#ececec;"></div>
<div style="position:absolute;left:267.50px;top:526.00px;width:747.00px;height:36.60px;background:#f4f4f4;"></div>
<div style="position:absolute;left:877.30px;top:489.00px;width:129.20px;height:34.00px;background:#c6e7f8;"></div>
<div style="position:absolute;left:319.75px;top:141.20px;width:186.25px;height:2.00px;background:#cc2a2a;"></div>
<div style="position:absolute;left:855.50px;top:81.50px;width:148.50px;height:2.00px;background:#cc2a2a;"></div>
<svg style="position:absolute;left:648.00px;top:122.00px;" width="38" height="16" viewBox="0 0 38 16"><path d="M12 9L34.5 14" stroke="#d41c1c" stroke-width="2.4" stroke-linecap="round"/><path d="M3 6.3L16.5 5.4L14.5 12Z" fill="#d41c1c"/></svg>
<span id="t1" class="t" style="left:21.00px;top:7.57px;font-size:9.60px;color:#e6f4f9;transform:scaleX(0.9055);transform-origin:left;">Carrera Finan&ccedil;as 2018 | Empresa de Exemplo</span>
<span id="t2" class="t" style="left:47.00px;top:28.63px;font-size:14.50px;color:#e9f1f5;transform:scaleX(0.9589);transform-origin:left;">Contas e Lan&ccedil;amentos</span>
<span id="t3" class="t" style="left:890.00px;top:30.84px;font-size:12.00px;color:#707070;font-style:italic;transform:scaleX(0.8264);transform-origin:left;">Pesquisar...</span>
<span id="t4" class="t" style="left:50.60px;top:60.51px;font-size:10.50px;color:#858585;transform:scaleX(0.8357);transform-origin:left;">Contas Abertas</span>
<span id="t5" class="t" style="left:43.00px;top:93.23px;font-size:10.00px;color:#8a8a8a;transform:scaleX(0.9945);transform-origin:left;">Caixa, Dinheiro</span>
<span id="t6" class="t" style="right:779.00px;top:93.23px;font-size:10.00px;color:#8a8a8a;transform:scaleX(0.9246);transform-origin:right;">3.839,00</span>
<span id="t7" class="t" style="left:43.00px;top:111.34px;font-size:12.00px;color:#333333;transform:scaleX(0.8798);transform-origin:left;">Caixa</span>
<span id="t8" class="t" style="right:779.00px;top:111.34px;font-size:12.00px;color:#333333;transform:scaleX(0.8669);transform-origin:right;">3.839,00</span>
<span id="t9" class="t" style="left:43.00px;top:143.03px;font-size:10.00px;color:#8a8a8a;transform:scaleX(1.0430);transform-origin:left;">Conta corrente</span>
<span id="t10" class="t" style="right:779.00px;top:143.03px;font-size:10.00px;color:#8a8a8a;transform:scaleX(0.8732);transform-origin:right;">7.962,01</span>
<span id="t11" class="t" style="left:43.00px;top:160.84px;font-size:12.00px;color:#2f93c9;transform:scaleX(0.9222);transform-origin:left;">Ita&uacute; 789</span>
<span id="t12" class="t" style="right:779.00px;top:160.84px;font-size:12.00px;color:#2f93c9;transform:scaleX(0.8562);transform-origin:right;">2.841,29</span>
<span id="t13" class="t" style="left:43.00px;top:180.84px;font-size:12.00px;color:#333333;transform:scaleX(0.9121);transform-origin:left;">Santander 44332</span>
<span id="t14" class="t" style="right:779.00px;top:180.84px;font-size:12.00px;color:#333333;transform:scaleX(0.8669);transform-origin:right;">5.120,72</span>
<span id="t15" class="t" style="left:43.00px;top:212.53px;font-size:10.00px;color:#8a8a8a;transform:scaleX(1.0261);transform-origin:left;">Cart&atilde;o de Cr&eacute;dito</span>
<span id="t16" class="t" style="left:43.00px;top:230.84px;font-size:12.00px;color:#333333;transform:scaleX(0.9328);transform-origin:left;">Master Ita&uacute;</span>
<span id="t17" class="t" style="left:47.00px;top:249.51px;font-size:9.20px;color:#9a9a9a;transform:scaleX(0.9312);transform-origin:left;">Dispon&iacute;vel: 1.500,00</span>
<span id="t18" class="t" style="left:43.00px;top:265.09px;font-size:12.00px;color:#333333;transform:scaleX(0.9333);transform-origin:left;">Visa Corporate</span>
<span id="t19" class="t" style="left:47.00px;top:283.41px;font-size:9.20px;color:#9a9a9a;transform:scaleX(0.9312);transform-origin:left;">Dispon&iacute;vel: 3.519,47</span>
<span id="t20" class="t" style="right:785.60px;top:506.30px;font-size:15.00px;color:#2a88c0;transform:scaleX(0.9600);transform-origin:right;">11.801,01</span>
<span id="t21" class="t" style="right:785.00px;top:525.13px;font-size:10.00px;color:#8a8a8a;transform:scaleX(0.9314);transform-origin:right;">saldo total dispon&iacute;vel</span>
<span id="t22" class="t" style="left:292.00px;top:64.01px;font-size:10.50px;color:#505050;transform:scaleX(0.8706);transform-origin:left;">Receita</span>
<span id="t23" class="t" style="left:350.00px;top:64.01px;font-size:10.50px;color:#505050;transform:scaleX(0.8926);transform-origin:left;">Despesa</span>
<span id="t24" class="t" style="left:414.00px;top:64.01px;font-size:10.50px;color:#505050;transform:scaleX(0.9089);transform-origin:left;">Transfer&ecirc;ncia</span>
<span id="t25" class="t" style="left:499.00px;top:64.01px;font-size:10.50px;color:#b5b5b5;transform:scaleX(0.9841);transform-origin:left;">Editar</span>
<span id="t26" class="t" style="left:622.50px;top:64.01px;font-size:10.50px;color:#505050;transform:scaleX(0.9155);transform-origin:left;">Ferramentas</span>
<span id="t27" class="t" style="left:743.00px;top:64.01px;font-size:10.50px;color:#505050;transform:scaleX(0.9889);transform-origin:left;">Imprimir</span>
<span id="t28" class="t" style="left:276.40px;top:95.15px;font-size:14.00px;color:#333333;transform:scaleX(0.9985);transform-origin:left;">Extrato: &uacute;ltimos 60 dias, desde 21/08/2017</span>
<span id="t29" class="t" style="left:825.50px;top:98.13px;font-size:10.00px;color:#999999;transform:scaleX(0.9893);transform-origin:left;">Exibir:</span>
<span id="t30" class="t" style="left:273.00px;top:123.69px;font-size:11.00px;color:#8a8a8a;transform:scaleX(0.9768);transform-origin:left;">Per&iacute;odos:</span>
<span id="t31" class="t" style="left:530.75px;top:124.53px;font-size:10.00px;color:#7a7a7a;transform:scaleX(0.8948);transform-origin:left;">Lan&ccedil;amentos Agendados</span>
<span id="t32" class="t" style="left:849.00px;top:124.49px;font-size:11.00px;color:#8a8a8a;font-style:italic;transform:scaleX(0.9850);transform-origin:left;">Localizar em Lan&ccedil;amentos</span>
<span id="t33" class="t" style="left:343.00px;top:148.03px;font-size:10.00px;color:#444444;transform:scaleX(0.9467);transform-origin:left;">Data</span>
<span id="t34" class="t" style="left:451.00px;top:148.03px;font-size:10.00px;color:#444444;transform:scaleX(0.9670);transform-origin:left;">Descri&ccedil;&atilde;o</span>
<span id="t35" class="t" style="left:624.00px;top:148.03px;font-size:10.00px;color:#444444;transform:scaleX(0.9703);transform-origin:left;">Favorecido</span>
<span id="t36" class="t" style="right:178.70px;top:148.03px;font-size:10.00px;color:#444444;transform:scaleX(0.9143);transform-origin:right;">Receita</span>
<span id="t37" class="t" style="right:96.00px;top:148.03px;font-size:10.00px;color:#444444;transform:scaleX(0.9501);transform-origin:right;">Despesa</span>
<span id="t38" class="t" style="right:26.20px;top:148.03px;font-size:10.00px;color:#444444;transform:scaleX(0.9383);transform-origin:right;">Saldo</span>
<span id="t39" class="t" style="left:270.00px;top:172.61px;font-size:10.50px;color:#8a8a8a;transform:scaleX(0.9832);transform-origin:left;">agosto</span>
<span id="t40" class="t" style="left:342.50px;top:190.28px;font-size:10.00px;color:#b92b38;transform:scaleX(0.9800);transform-origin:left;">21/08/2017</span>
<span id="t41" class="t" style="left:451.00px;top:190.28px;font-size:10.00px;color:#b92b38;transform:scaleX(0.9800);transform-origin:left;">Mensalidade 04/17</span>
<span id="t42" class="t" style="left:624.00px;top:190.28px;font-size:10.00px;color:#b92b38;transform:scaleX(0.9800);transform-origin:left;">Banco</span>
<span id="t43" class="t" style="right:96.20px;top:190.28px;font-size:10.00px;color:#b92b38;transform:scaleX(0.9800);transform-origin:right;">(39,00)</span>
<span id="t44" class="t" style="right:26.00px;top:190.28px;font-size:10.00px;color:#444444;transform:scaleX(0.9800);transform-origin:right;">2.214,75</span>
<span id="t45" class="t" style="left:342.50px;top:207.78px;font-size:10.00px;color:#b92b38;transform:scaleX(0.9800);transform-origin:left;">21/08/2017</span>
<span id="t46" class="t" style="left:451.00px;top:207.78px;font-size:10.00px;color:#b92b38;transform:scaleX(0.9800);transform-origin:left;">&nbsp;03/30</span>
<span id="t47" class="t" style="right:96.20px;top:207.78px;font-size:10.00px;color:#b92b38;transform:scaleX(0.9800);transform-origin:right;">(468,71)</span>
<span id="t48" class="t" style="right:26.00px;top:207.78px;font-size:10.00px;color:#444444;transform:scaleX(0.9800);transform-origin:right;">1.746,04</span>
<span id="t49" class="t" style="left:342.50px;top:225.28px;font-size:10.00px;color:#383838;transform:scaleX(0.9800);transform-origin:left;">21/08/2017</span>
<span id="t50" class="t" style="right:178.70px;top:225.28px;font-size:10.00px;color:#444444;transform:scaleX(0.9800);transform-origin:right;">500,00</span>
<span id="t51" class="t" style="right:26.00px;top:225.28px;font-size:10.00px;color:#444444;transform:scaleX(0.9800);transform-origin:right;">2.246,04</span>
<span id="t52" class="t" style="left:342.50px;top:242.78px;font-size:10.00px;color:#383838;transform:scaleX(0.9800);transform-origin:left;">25/08/2017</span>
<span id="t53" class="t" style="left:624.00px;top:242.78px;font-size:10.00px;color:#383838;transform:scaleX(0.9800);transform-origin:left;">(Outros)</span>
<span id="t54" class="t" style="right:178.70px;top:242.78px;font-size:10.00px;color:#444444;transform:scaleX(0.9800);transform-origin:right;">57,03</span>
<span id="t55" class="t" style="right:26.00px;top:242.78px;font-size:10.00px;color:#444444;transform:scaleX(0.9800);transform-origin:right;">2.303,07</span>
<span id="t56" class="t" style="left:270.00px;top:267.91px;font-size:10.50px;color:#8a8a8a;transform:scaleX(0.9993);transform-origin:left;">setembro</span>
<span id="t57" class="t" style="left:342.50px;top:285.59px;font-size:10.00px;color:#383838;transform:scaleX(0.9800);transform-origin:left;">10/09/2017</span>
<span id="t58" class="t" style="left:451.00px;top:285.59px;font-size:10.00px;color:#383838;transform:scaleX(0.9800);transform-origin:left;">Consultoria</span>
<span id="t59" class="t" style="left:624.00px;top:285.59px;font-size:10.00px;color:#383838;transform:scaleX(0.9800);transform-origin:left;">Papelaria JJ</span>
<span id="t60" class="t" style="right:178.70px;top:285.59px;font-size:10.00px;color:#444444;transform:scaleX(0.9800);transform-origin:right;">500,00</span>
<span id="t61" class="t" style="right:26.00px;top:285.59px;font-size:10.00px;color:#444444;transform:scaleX(0.9800);transform-origin:right;">2.803,07</span>
<span id="t62" class="t" style="left:342.50px;top:303.09px;font-size:10.00px;color:#b92b38;transform:scaleX(0.9800);transform-origin:left;">10/09/2017</span>
<span id="t63" class="t" style="left:451.00px;top:303.09px;font-size:10.00px;color:#b92b38;transform:scaleX(0.9800);transform-origin:left;">Pagamento fatura 10/09/2017</span>
<span id="t64" class="t" style="left:624.00px;top:303.09px;font-size:10.00px;color:#b92b38;transform:scaleX(0.9800);transform-origin:left;">&gt; para: Master Ita&uacute;</span>
<span id="t65" class="t" style="right:96.20px;top:303.09px;font-size:10.00px;color:#b92b38;transform:scaleX(0.9800);transform-origin:right;">(375,00)</span>
<span id="t66" class="t" style="right:26.00px;top:303.09px;font-size:10.00px;color:#444444;transform:scaleX(0.9800);transform-origin:right;">2.428,07</span>
<span id="t67" class="t" style="left:342.50px;top:320.59px;font-size:10.00px;color:#b92b38;transform:scaleX(0.9800);transform-origin:left;">11/09/2017</span>
<span id="t68" class="t" style="left:451.00px;top:320.59px;font-size:10.00px;color:#b92b38;transform:scaleX(0.9800);transform-origin:left;">Material para escrit&oacute;rio</span>
<span id="t69" class="t" style="left:624.00px;top:320.59px;font-size:10.00px;color:#b92b38;transform:scaleX(0.9800);transform-origin:left;">Papelaria JJ</span>
<span id="t70" class="t" style="right:96.20px;top:320.59px;font-size:10.00px;color:#b92b38;transform:scaleX(0.9800);transform-origin:right;">(44,04)</span>
<span id="t71" class="t" style="right:26.00px;top:320.59px;font-size:10.00px;color:#444444;transform:scaleX(0.9800);transform-origin:right;">2.384,03</span>
<span id="t72" class="t" style="left:342.50px;top:338.09px;font-size:10.00px;color:#383838;transform:scaleX(0.9800);transform-origin:left;">19/09/2017</span>
<span id="t73" class="t" style="left:451.00px;top:338.09px;font-size:10.00px;color:#383838;transform:scaleX(0.9800);transform-origin:left;">Treinamento</span>
<span id="t74" class="t" style="left:624.00px;top:338.09px;font-size:10.00px;color:#383838;transform:scaleX(0.9800);transform-origin:left;">Loja Inform&aacute;tica</span>
<span id="t75" class="t" style="right:178.70px;top:338.09px;font-size:10.00px;color:#444444;transform:scaleX(0.9800);transform-origin:right;">550,00</span>
<span id="t76" class="t" style="right:26.00px;top:338.09px;font-size:10.00px;color:#444444;transform:scaleX(0.9800);transform-origin:right;">2.934,03</span>
<span id="t77" class="t" style="left:342.50px;top:355.59px;font-size:10.00px;color:#b92b38;transform:scaleX(0.9800);transform-origin:left;">25/09/2017</span>
<span id="t78" class="t" style="left:451.00px;top:355.59px;font-size:10.00px;color:#b92b38;transform:scaleX(0.9800);transform-origin:left;">TV/Internet</span>
<span id="t79" class="t" style="left:624.00px;top:355.59px;font-size:10.00px;color:#b92b38;transform:scaleX(0.9800);transform-origin:left;">Cia Telef&ocirc;nica</span>
<span id="t80" class="t" style="right:96.20px;top:355.59px;font-size:10.00px;color:#b92b38;transform:scaleX(0.9800);transform-origin:right;">(149,83)</span>
<span id="t81" class="t" style="right:26.00px;top:355.59px;font-size:10.00px;color:#444444;transform:scaleX(0.9800);transform-origin:right;">2.784,20</span>
<span id="t82" class="t" style="left:342.50px;top:373.09px;font-size:10.00px;color:#b92b38;transform:scaleX(0.9800);transform-origin:left;">28/09/2017</span>
<span id="t83" class="t" style="left:451.00px;top:373.09px;font-size:10.00px;color:#b92b38;transform:scaleX(0.9800);transform-origin:left;">Parcela 04/30</span>
<span id="t84" class="t" style="left:624.00px;top:373.09px;font-size:10.00px;color:#b92b38;transform:scaleX(0.9800);transform-origin:left;">Banco</span>
<span id="t85" class="t" style="right:96.20px;top:373.09px;font-size:10.00px;color:#b92b38;transform:scaleX(0.9800);transform-origin:right;">(468,71)</span>
<span id="t86" class="t" style="right:26.00px;top:373.09px;font-size:10.00px;color:#444444;transform:scaleX(0.9800);transform-origin:right;">2.315,49</span>
<span id="t87" class="t" style="left:342.50px;top:390.59px;font-size:10.00px;color:#383838;transform:scaleX(0.9800);transform-origin:left;">28/09/2017</span>
<span id="t88" class="t" style="left:451.00px;top:390.59px;font-size:10.00px;color:#383838;transform:scaleX(0.9800);transform-origin:left;">Venda de Acess&oacute;rios</span>
<span id="t89" class="t" style="left:624.00px;top:390.59px;font-size:10.00px;color:#383838;transform:scaleX(0.9800);transform-origin:left;">(Outros)</span>
<span id="t90" class="t" style="right:178.70px;top:390.59px;font-size:10.00px;color:#444444;transform:scaleX(0.9800);transform-origin:right;">150,00</span>
<span id="t91" class="t" style="right:26.00px;top:390.59px;font-size:10.00px;color:#444444;transform:scaleX(0.9800);transform-origin:right;">2.465,49</span>
<span id="t92" class="t" style="left:270.00px;top:415.71px;font-size:10.50px;color:#8a8a8a;transform:scaleX(1.0386);transform-origin:left;">outubro</span>
<span id="t93" class="t" style="left:342.50px;top:433.39px;font-size:10.00px;color:#383838;transform:scaleX(0.9800);transform-origin:left;">10/10/2017</span>
<span id="t94" class="t" style="left:624.00px;top:433.39px;font-size:10.00px;color:#383838;transform:scaleX(0.9800);transform-origin:left;">Papelaria JJ</span>
<span id="t95" class="t" style="right:178.70px;top:433.39px;font-size:10.00px;color:#444444;transform:scaleX(0.9800);transform-origin:right;">500,00</span>
<span id="t96" class="t" style="right:26.00px;top:433.39px;font-size:10.00px;color:#444444;transform:scaleX(0.9800);transform-origin:right;">2.965,49</span>
<span id="t97" class="t" style="left:342.50px;top:450.89px;font-size:10.00px;color:#b92b38;transform:scaleX(0.9800);transform-origin:left;">10/10/2017</span>
<span id="t98" class="t" style="left:451.00px;top:450.89px;font-size:10.00px;color:#b92b38;transform:scaleX(0.9800);transform-origin:left;">Tv/Internet</span>
<span id="t99" class="t" style="left:624.00px;top:450.89px;font-size:10.00px;color:#b92b38;transform:scaleX(0.9800);transform-origin:left;">Cia Telef&ocirc;nica</span>
<span id="t100" class="t" style="right:96.20px;top:450.89px;font-size:10.00px;color:#b92b38;transform:scaleX(0.9800);transform-origin:right;">(133,65)</span>
<span id="t101" class="t" style="right:26.00px;top:450.89px;font-size:10.00px;color:#444444;transform:scaleX(0.9800);transform-origin:right;">2.831,84</span>
<span id="t102" class="t" style="left:342.50px;top:468.39px;font-size:10.00px;color:#383838;transform:scaleX(0.9800);transform-origin:left;">10/10/2017</span>
<span id="t103" class="t" style="left:451.00px;top:468.39px;font-size:10.00px;color:#383838;transform:scaleX(0.9800);transform-origin:left;">Despesas com cart&oacute;rio</span>
<span id="t104" class="t" style="left:624.00px;top:468.39px;font-size:10.00px;color:#383838;transform:scaleX(0.9800);transform-origin:left;">Cart&oacute;rio</span>
<span id="t105" class="t" style="right:178.70px;top:468.39px;font-size:10.00px;color:#444444;transform:scaleX(0.9800);transform-origin:right;">139,65</span>
<span id="t106" class="t" style="right:26.00px;top:468.39px;font-size:10.00px;color:#444444;transform:scaleX(0.9800);transform-origin:right;">2.971,49</span>
<span id="t107" class="t" style="left:272.00px;top:497.90px;font-size:13.00px;color:#3d9bd2;transform:scaleX(0.8062);transform-origin:left;">2.996,68</span>
<span id="t108" class="t" style="left:272.00px;top:512.38px;font-size:9.00px;color:#888888;transform:scaleX(0.9151);transform-origin:left;">total cr&eacute;ditos</span>
<span id="t109" class="t" style="left:415.30px;top:497.90px;font-size:13.00px;color:#b92b38;transform:scaleX(0.8133);transform-origin:left;">(2.409,14)</span>
<span id="t110" class="t" style="left:415.30px;top:512.38px;font-size:9.00px;color:#888888;transform:scaleX(0.8960);transform-origin:left;">total d&eacute;bitos</span>
<span id="t111" class="t" style="right:19.40px;top:492.68px;font-size:15.50px;color:#2f93c9;transform:scaleX(0.9446);transform-origin:right;">2.841,29</span>
<span id="t112" class="t" style="right:20.00px;top:510.88px;font-size:9.00px;color:#888888;transform:scaleX(0.9760);transform-origin:right;">saldo</span>
<span id="t113" class="t" style="left:272.50px;top:533.14px;font-size:12.00px;color:#8a8a8a;transform:scaleX(0.8982);transform-origin:left;">18</span>
<span id="t114" class="t" style="left:272.50px;top:547.18px;font-size:9.00px;color:#8a8a8a;transform:scaleX(0.8940);transform-origin:left;">itens</span>
<span id="t115" class="t" style="right:159.70px;top:533.14px;font-size:12.00px;color:#444444;transform:scaleX(0.8562);transform-origin:right;">0,00</span>
<span id="t116" class="t" style="right:160.40px;top:548.18px;font-size:9.00px;color:#888888;transform:scaleX(0.7851);transform-origin:right;">limite</span>
<span id="t117" class="t" style="right:18.00px;top:533.14px;font-size:12.00px;color:#3d9bd2;transform:scaleX(0.8733);transform-origin:right;">2.841,29</span>
<span id="t118" class="t" style="right:19.00px;top:548.18px;font-size:9.00px;color:#888888;transform:scaleX(0.8635);transform-origin:right;">dispon&iacute;vel</span>
<span class="t" style="left:139.85px;top:303.27px;font-size:21.74px;font-weight:bold;color:#ef7a35;transform:scaleX(0.881);transform-origin:left;text-shadow:0.5px 0.7px 0.3px #b8582a;">1</span>
<span class="t" style="left:584.39px;top:408.87px;font-size:20.86px;font-weight:bold;color:#ef7a35;transform:scaleX(0.978);transform-origin:left;text-shadow:0.5px 0.7px 0.3px #b8582a;">2</span>
<span class="t" style="left:473.22px;top:47.94px;font-size:20.42px;font-weight:bold;color:#ef7a35;transform:scaleX(0.921);transform-origin:left;text-shadow:0.5px 0.7px 0.3px #b8582a;">3</span>
<span class="t" style="left:392.09px;top:144.88px;font-size:21.09px;font-weight:bold;color:#ef7a35;transform:scaleX(0.975);transform-origin:left;text-shadow:0.5px 0.7px 0.3px #b8582a;">4</span>
<span class="t" style="left:696.37px;top:128.96px;font-size:22.14px;font-weight:bold;color:#ef7a35;transform:scaleX(0.948);transform-origin:left;text-shadow:0.5px 0.7px 0.3px #b8582a;">5</span>
<span class="t" style="left:920.10px;top:62.94px;font-size:20.42px;font-weight:bold;color:#ef7a35;transform:scaleX(1.097);transform-origin:left;text-shadow:0.5px 0.7px 0.3px #b8582a;">6</span>
<span class="t" style="left:987.97px;top:117.48px;font-size:23.24px;font-weight:bold;color:#ef7a35;transform:scaleX(0.888);transform-origin:left;text-shadow:0.5px 0.7px 0.3px #b8582a;">7</span>
<span class="t" style="left:610.75px;top:514.52px;font-size:20.56px;font-weight:bold;color:#ef7a35;transform:scaleX(1.050);transform-origin:left;text-shadow:0.5px 0.7px 0.3px #b8582a;">8</span>
</body></html>
